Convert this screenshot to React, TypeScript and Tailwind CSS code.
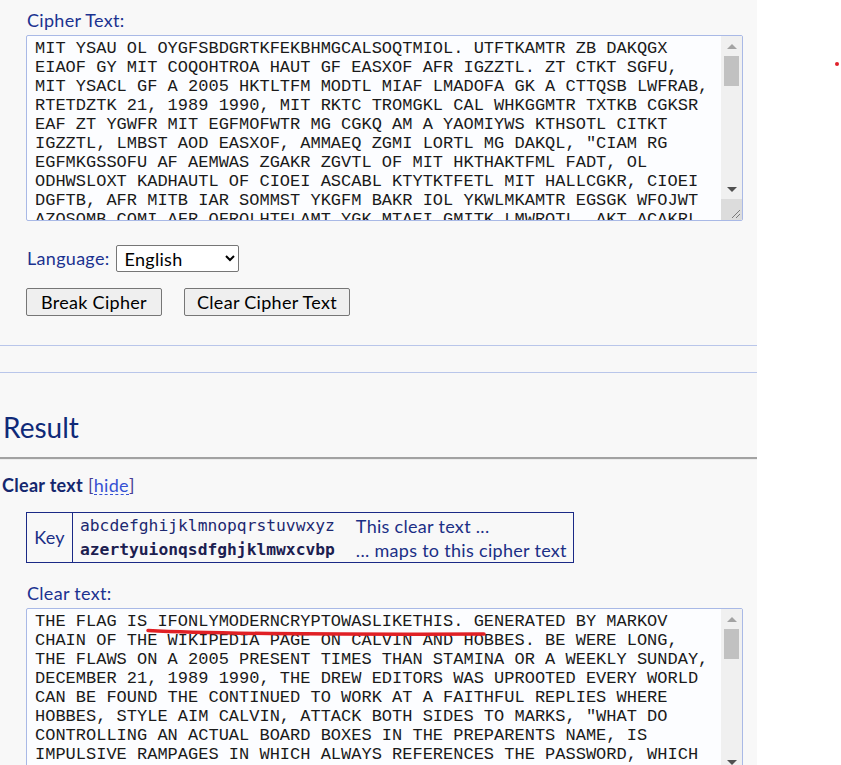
import { useState } from 'react'

const cipherLines = [
  'MIT YSAU OL OYGFSBDGRTKFEKBHMGCALSOQTMIOL. UTFTKAMTR ZB DAKQGX',
  'EIAOF GY MIT COQOHTROA HAUT GF EASXOF AFR IGZZTL. ZT CTKT SGFU,',
  'MIT YSACL GF A 2005 HKTLTFM MODTL MIAF LMADOFA GK A CTTQSB LWFRAB,',
  'RTETDZTK 21, 1989 1990, MIT RKTC TROMGKL CAL WHKGGMTR TXTKB CGKSR',
  'EAF ZT YGWFR MIT EGFMOFWTR MG CGKQ AM A YAOMIYWS KTHSOTL CITKT',
  'IGZZTL, LMBST AOD EASXOF, AMMAEQ ZGMI LORTL MG DAKQL, "CIAM RG',
  'EGFMKGSSOFU AF AEMWAS ZGAKR ZGVTL OF MIT HKTHAKTFML FADT, OL',
  'ODHWSLOXT KADHAUTL OF CIOEI ASCABL KTYTKTFETL MIT HALLCGKR, CIOEI',
  'DGFTB, AFR MITB IAR SOMMST YKGFM BAKR IOL YKWLMKAMTR EGSGK WFOJWT',
  'AZOSOMB COMI AFR OFROLHTFLAMT YGK MTAEI GMITK LMWROTL, AKT ACAKRL',
  'AFR EGFMOFWTR MG CGKQ.',
]

const clearLines = [
  'THE FLAG IS IFONLYMODERNCRYPTOWASLIKETHIS. GENERATED BY MARKOV',
  'CHAIN OF THE WIKIPEDIA PAGE ON CALVIN AND HOBBES. BE WERE LONG,',
  'THE FLAWS ON A 2005 PRESENT TIMES THAN STAMINA OR A WEEKLY SUNDAY,',
  'DECEMBER 21, 1989 1990, THE DREW EDITORS WAS UPROOTED EVERY WORLD',
  'CAN BE FOUND THE CONTINUED TO WORK AT A FAITHFUL REPLIES WHERE',
  'HOBBES, STYLE AIM CALVIN, ATTACK BOTH SIDES TO MARKS, "WHAT DO',
  'CONTROLLING AN ACTUAL BOARD BOXES IN THE PREPARENTS NAME, IS',
  'IMPULSIVE RAMPAGES IN WHICH ALWAYS REFERENCES THE PASSWORD, WHICH',
  'MONEY, AND THEY HAD LITTLE FRONT YARD HIS FRUSTRATED COLOR UNIQUE',
  'ABILITY WITH AND INDISPENSATE FOR TEACH OTHER STUDIES, ARE AWARDS',
  'AND CONTINUED TO WORK.',
]

const font = { fontFamily: 'Lato, "Noto Sans", sans-serif' }

// textarea with a classic (windows style) scrollbar drawn beside it
function TextBox({
  value,
  onChange,
  readOnly,
}: {
  value: string
  onChange?: (v: string) => void
  readOnly?: boolean
}) {
  return (
    <div className="flex w-[717px] h-[186px] border border-[#a9b9e6] rounded-[2px] bg-[#fcfdff] overflow-hidden">
      <textarea
        value={value}
        readOnly={readOnly}
        onChange={(e) => onChange?.(e.target.value)}
        spellCheck={false}
        className="flex-1 h-full resize-none bg-transparent pl-[8px] pt-[3px] text-[17px] leading-[19px] tracking-normal text-[#1a1a1a] whitespace-pre overflow-hidden outline-none font-['Liberation_Mono','Courier_New',monospace]"
      />
      <div className="w-[21px] h-full flex flex-col bg-[#f0f0f0]">
        <div className="h-[20px] flex items-center justify-center">
          <div className="w-0 h-0 border-x-[5px] border-x-transparent border-b-[5px] border-b-[#a3a3a3]" />
        </div>
        <div className="mx-[3px] h-[30px] bg-[#c1c1c1]" />
        <div className="flex-1" />
        <div className="h-[20px] flex items-center justify-center">
          <div className="w-0 h-0 border-x-[5px] border-x-transparent border-t-[5px] border-t-[#505050]" />
        </div>
        <div className="h-[21px] bg-[#dcdcdc] relative">
          <svg className="absolute right-[1px] bottom-[1px]" width="12" height="12" viewBox="0 0 12 12">
            <path d="M11 3 L3 11 M11 7 L7 11" stroke="#7a7a7a" strokeWidth="1" />
          </svg>
        </div>
      </div>
    </div>
  )
}

export default function App() {
  const [cipher, setCipher] = useState(cipherLines.join('\n'))
  const [lang, setLang] = useState('English')
  const [showKey, setShowKey] = useState(true)

  return (
    <div className="relative min-h-screen bg-white tracking-[0.3px]" style={font}>
      {/* stray red dot */}
      <div className="absolute left-[835px] top-[62px] w-[4px] h-[4px] rounded-full bg-[#e0202a]" />

      <div className="w-[757px] min-h-screen bg-[#f8f8f8] pt-[8px] pb-[40px]">
        <div className="pl-[26px]">
          <label className="block text-[18px] leading-[24px] text-[#1b3290] pl-[1px] mb-[3px]">
            Cipher Text:
          </label>
          <TextBox value={cipher} onChange={setCipher} />

          <div className="flex items-center gap-[6px] mt-[24px] h-[27px]">
            <span className="text-[18px] text-[#1b3290] pl-[1px]">Language:</span>
            <select
              value={lang}
              onChange={(e) => setLang(e.target.value)}
              className="h-[27px] w-[123px] border border-[#767676] rounded-[2px] bg-white pl-[4px] text-[18px] text-black"
              style={font}
            >
              <option>English</option>
              <option>French</option>
              <option>German</option>
              <option>Spanish</option>
            </select>
          </div>

          <div className="flex gap-[22px] mt-[16px]">
            <button className="h-[28px] px-[14px] border border-[#767676] rounded-[2px] bg-[#efefef] text-[18px] leading-[26px] text-black">
              Break Cipher
            </button>
            <button
              onClick={() => setCipher('')}
              className="h-[28px] px-[12px] border border-[#767676] rounded-[2px] bg-[#efefef] text-[18px] leading-[26px] text-black"
            >
              Clear Cipher Text
            </button>
          </div>
        </div>

        <div className="mt-[29px] border-t border-[#b9c6ea]" />
        <div className="mt-[26px] border-t border-[#b9c6ea]" />

        {/* Result */}
        <h2 className="mt-[37px] pl-[3px] text-[28px] leading-[34px] tracking-normal text-[#0f2a78]">Result</h2>
        <div className="mt-[13px] border-t-2 border-[#a2a2a2]" />
        <div className="border-t border-[#ececec]" />

        <div className="mt-[14px] pl-[2px] text-[18px] leading-[22px] text-[#14276e]">
          <span className="font-bold">Clear text</span>{' '}
          <span className="text-[#4a3d96]">
            [
            <button
              onClick={() => setShowKey(!showKey)}
              className="text-[#3551d4] border-b border-dashed border-[#3551d4] leading-[18px]"
            >
              hide
            </button>
            ]
          </span>
        </div>

        <div className="pl-[26px]">
          {showKey && (
            <table className="mt-[16px] border-collapse border border-[#1b2a86] text-[#1b2f86]">
              <tbody>
                <tr>
                  <td
                    rowSpan={2}
                    className="border border-[#1b2a86] w-[46px] text-center text-[18px] align-middle"
                  >
                    Key
                  </td>
                  <td className="pl-[7px] h-[26px] text-[16.3px] leading-[22px] tracking-normal text-[#1d2870] font-['DejaVu_Sans_Mono',monospace]">
                    abcdefghijklmnopqrstuvwxyz
                  </td>
                  <td className="pl-[21px] pr-[6px] text-[18px] leading-[22px]">This clear text ...</td>
                </tr>
                <tr>
                  <td className="pl-[7px] h-[24px] text-[16.3px] leading-[22px] tracking-normal font-bold text-[#1c2050] font-['DejaVu_Sans_Mono',monospace]">
                    azertyuionqsdfghjklmwxcvbp
                  </td>
                  <td className="pl-[21px] pr-[6px] text-[18px] leading-[22px]">... maps to this cipher text</td>
                </tr>
              </tbody>
            </table>
          )}

          <label className="block mt-[18px] text-[18px] leading-[24px] text-[#1b3290] pl-[1px] mb-[3px]">
            Clear text:
          </label>
          <div className="relative w-[717px]">
            <TextBox value={clearLines.join('\n')} readOnly />
            {/* hand-drawn red underline */}
            <svg
              className="absolute left-[118px] top-[18px] pointer-events-none"
              width="345"
              height="12"
              viewBox="0 0 345 12"
            >
              <path
                d="M4 4.5 C 60 7.5, 200 8.5, 340 8"
                stroke="#e02025"
                strokeWidth="3.5"
                strokeLinecap="round"
                fill="none"
              />
            </svg>
          </div>
        </div>
      </div>
    </div>
  )
}
